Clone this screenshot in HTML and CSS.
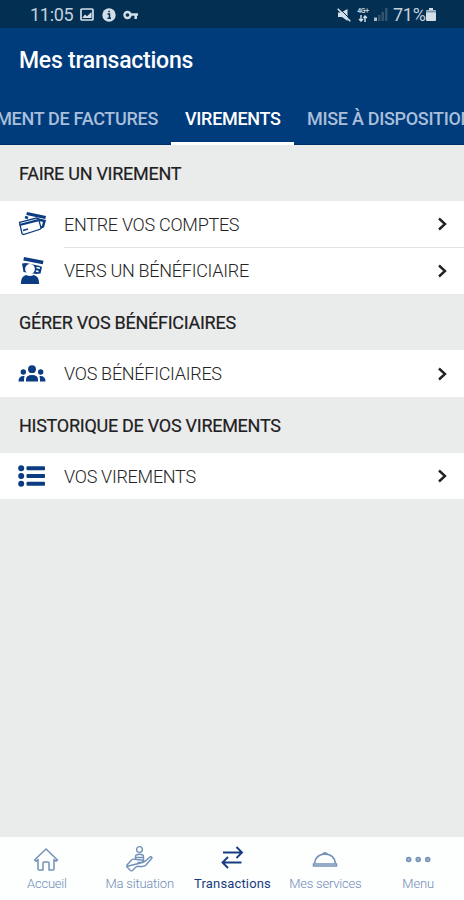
FILE: index.html
```html
<!DOCTYPE html>
<html lang="fr">
<head>
<meta charset="utf-8">
<title>Mes transactions</title>
<link rel="stylesheet" href="styles.css">
</head>
<body>
<div class="app">
  <div class="status">
    <span class="clock">11:05</span>
    <svg class="s-image" width="14" height="13" viewBox="0 0 14 13"><rect x="1" y="1" width="12" height="11" rx="1" fill="none" stroke="#d3dfe8" stroke-width="1.7"/><path d="M2.500 9.500L5 6.500l2 1.800L11.500 4v6h-9z" fill="#d3dfe8"/></svg>
    <svg class="s-info" width="14" height="14" viewBox="0 0 14 14"><circle cx="7" cy="7" r="6.700" fill="#d3dfe8"/><path d="M5.500 6H7.500V10M5.500 10.300h3.500M6.300 3.500h1.600" fill="none" stroke="#033052" stroke-width="1.500"/></svg>
    <svg class="s-key" width="16" height="10" viewBox="0 0 16 10"><circle cx="4.500" cy="5" r="3" fill="none" stroke="#d3dfe8" stroke-width="2.400"/><path d="M8 4.500h7M12.700 5v4" fill="none" stroke="#d3dfe8" stroke-width="2.500"/></svg>
    <span class="fill"></span>
    <svg class="s-mute" width="14" height="14" viewBox="0 0 14 14"><path d="M1 4.500h3L10.500 1v12L5 9H1z" fill="#d3dfe8"/><path d="M2 0L14 12" stroke="#033052" stroke-width="1"/><path d="M.7.700L13.300 13.300" stroke="#d3dfe8" stroke-width="1.600"/></svg>
    <span class="net"><span>4G+</span><svg width="10" height="7" viewBox="0 0 10 7"><path d="M3 0v6M1 4l2 2 2-2M7 7V1M5.500 3L7 1l2 2" fill="none" stroke="#d3dfe8" stroke-width="1.400"/></svg></span>
    <svg class="s-signal" width="14" height="13" viewBox="0 0 14 13"><path d="M0 9.500h3V13H0z" fill="#a9bdcb"/><path d="M4 7h2.500v6H4zM7.500 4H10v9H7.500zM11 0h2.500v13H11z" fill="#31536f"/></svg>
    <span class="pct">71%</span>
    <svg class="s-battery" width="10" height="13" viewBox="0 0 10 13"><path d="M3 0h4v2h2q1 0 1 1v9q0 1-1 1H1q-1 0-1-1V3q0-1 1-1h2z" fill="#d3dfe8"/><path d="M0 2.500h10V4.500H0z" fill="#7c98ac"/></svg>
  </div>
  <header class="header">
    <h1>Mes transactions</h1>
    <nav class="tabs">
      <span class="tab first">MENT DE FACTURES</span>
      <span class="tab active">VIREMENTS</span>
      <span class="tab last">MISE À DISPOSITION</span>
    </nav>
  </header>
  <main>
    <h2>FAIRE UN VIREMENT</h2>
    <div class="row">
      <svg class="icon" width="28" height="26" viewBox="0 0 28 26"><path d="M9 1l19 4-.7 3L8.300 4z" fill="#0b3b80"/><path d="M7 6l3 1M20 8.500l6.500 1.500-1.500 5.500-3 1.500" fill="none" stroke="#0b3b80" stroke-width="2.500"/><path d="M1.500 11.300L18.500 7l2 .8 2.500 9-1 1.500-16.500 5.200-1.500-1z" fill="#fff" stroke="#0b3b80" stroke-width="1.300"/><path d="M1.500 14L20.500 9.200" stroke="#0b3b80" stroke-width="2.300"/><path d="M5 19.500l5-1.500" stroke="#0b3b80" stroke-width="1.500"/></svg>
      <span class="label">ENTRE VOS COMPTES</span>
      <svg class="chev" width="10" height="14" viewBox="0 0 10 14"><path d="M2 1.500L8 7l-6 5.500" fill="none" stroke="#222" stroke-width="2.400"/></svg>
    </div>
    <div class="row divided">
      <svg class="icon" width="28" height="28" viewBox="0 0 28 28"><path d="M6 0l19.500 3.700-.7 3.600L5.300 3.500z" fill="#0b3b80"/><path d="M4 6.500l4-.5 14 3 2 1-1.500 6.500-4 .5-13-2z" fill="#0b3b80"/><path d="M18.500 10.500l3.500.8M18 14l2.500.5" stroke="#fff" stroke-width="1.400"/><circle cx="12" cy="12" r="4.900" fill="#fff"/><path d="M2.800 27q0-8 5.500-9 3.700 2 7.400 0 5.500 1 5.500 9z" fill="#0b3b80"/></svg>
      <span class="label">VERS UN BÉNÉFICIAIRE</span>
      <svg class="chev" width="10" height="14" viewBox="0 0 10 14"><path d="M2 1.500L8 7l-6 5.500" fill="none" stroke="#222" stroke-width="2.400"/></svg>
    </div>
    <h2>GÉRER VOS BÉNÉFICIAIRES</h2>
    <div class="row single">
      <svg class="icon" width="28" height="17" viewBox="0 0 28 17"><g fill="#0b3b80"><circle cx="14" cy="4.200" r="3.900"/><circle cx="5.300" cy="7" r="2.700"/><circle cx="22.700" cy="7" r="2.700"/><path d="M8 16.500v-2q0-4.500 6-4.500t6 4.500v2zM.5 16.500q0-6 6-5.500Q6 12.500 6 16.500zM27.500 16.500q0-6-6-5.500.500 1.500.5 5.500z"/></g></svg>
      <span class="label">VOS BÉNÉFICIAIRES</span>
      <svg class="chev" width="10" height="14" viewBox="0 0 10 14"><path d="M2 1.500L8 7l-6 5.500" fill="none" stroke="#222" stroke-width="2.400"/></svg>
    </div>
    <h2>HISTORIQUE DE VOS VIREMENTS</h2>
    <div class="row">
      <svg class="icon" width="28" height="22" viewBox="0 0 28 22"><g fill="#0b3b80"><circle cx="3.200" cy="3.200" r="3"/><circle cx="3.200" cy="11" r="3"/><circle cx="3.200" cy="18.800" r="3"/><rect x="8.500" y="1.200" width="18.500" height="4" rx="1"/><rect x="8.500" y="9" width="18.500" height="4" rx="1"/><rect x="8.500" y="16.800" width="18.500" height="4" rx="1"/></g></svg>
      <span class="label">VOS VIREMENTS</span>
      <svg class="chev" width="10" height="14" viewBox="0 0 10 14"><path d="M2 1.500L8 7l-6 5.500" fill="none" stroke="#222" stroke-width="2.400"/></svg>
    </div>
  </main>
  <nav class="bottom">
    <div class="item">
      <svg width="28" height="28" viewBox="0 0 28 28"><path d="M2.500 15L14 4l11.500 11-1.500 1.300-2-1.800v9.500q0 1-1 1h-4v-7q0-1-1-1h-4q-1 0-1 1v7H7q-1 0-1-1v-9.500l-2 1.800z" fill="none" stroke="#7391b8" stroke-width="1.500" stroke-linejoin="round"/></svg>
      <span>Accueil</span>
    </div>
    <div class="item">
      <svg width="28" height="28" viewBox="0 0 28 28"><g fill="none" stroke="#7391b8" stroke-width="1.400" stroke-linejoin="round"><circle cx="14.500" cy="4.500" r="2.900"/><path d="M10.500 14v-2.500q0-2.200 4-2.200t4 2.200V16M11 12.500h7"/><path d="M1.500 20.500l5-5.500q2-1.500 5-.5l5 .5q2.500 1 0 2.500h-4M17.500 17.500l3-1.500 4.500-4q2-.8 2 1l-6 7q-1.500 1.500-4 1.500h-5.500l-4 4q-1 .8-2 0l-4-4z"/></g></svg>
      <span>Ma situation</span>
    </div>
    <div class="item current">
      <svg width="28" height="28" viewBox="0 0 28 28"><path d="M5 7.500h19M18.500 2l5.500 5.500-5.500 5.500M23.500 17.500H4.500M10 12l-5.500 5.500L10 23" fill="none" stroke="#173d80" stroke-width="1.900"/></svg>
      <span>Transactions</span>
    </div>
    <div class="item">
      <svg width="28" height="28" viewBox="0 0 28 28"><path d="M2.500 21v-2h23v2z" fill="none" stroke="#7391b8" stroke-width="1.500"/><path d="M3.500 18.500Q4.500 9.500 14 9q9.500.5 10.500 9.500" fill="none" stroke="#7391b8" stroke-width="1.700"/><path d="M10.500 9.500q1-2.500 3.500-2.500t3.500 2.500z" fill="#7391b8"/></svg>
      <span>Mes services</span>
    </div>
    <div class="item">
      <svg width="28" height="28" viewBox="0 0 28 28"><g fill="#a5b9d3" stroke="#7391b8" stroke-width="1.500"><circle cx="4.700" cy="14.500" r="2"/><circle cx="14.200" cy="14.500" r="2"/><circle cx="23.700" cy="14.500" r="2"/></g></svg>
      <span>Menu</span>
    </div>
  </nav>
</div>
</body>
</html>
```
FILE: styles.css
```css
* { box-sizing: border-box; }
body { margin: 0; font-family: Roboto, "Liberation Sans", sans-serif; }
.app { width: 464px; height: 900px; display: flex; flex-direction: column; background: #eaecec; overflow: hidden; }
svg { display: block; flex: none; }
span { white-space: nowrap; }

.status { height: 28px; flex: none; background: #033052; color: #c3d1dc; display: flex; align-items: center; padding: 1px 28px 0 30px; font-size: 18px; letter-spacing: -.3px; }
.clock { width: 50px; }
.s-info { margin-left: 8px; }
.s-key { margin-left: 7px; }
.fill { flex: 1; }
.net { display: flex; flex-direction: column; align-items: center; width: 14px; margin-left: 5px; font-size: 7px; font-weight: 700; line-height: 7px; }
.s-signal { margin-left: 4px; }
.pct { width: 33px; margin-left: 5px; }

.header { height: 117px; flex: none; background: #003b7b; display: flex; flex-direction: column; justify-content: space-between; border-bottom: 1px solid #00306c; }
h1 { margin: 0; padding: 17px 0 0 19px; font-size: 23px; font-weight: 500; line-height: 32px; letter-spacing: -.25px; color: #fff; }
.tabs { display: grid; grid-template-columns: 171px 123px 170px; height: 54px; font-size: 18px; font-weight: 500; letter-spacing: -.3px; color: #a9bfda; line-height: 56px; margin-bottom: -1px; }
.tab { overflow: hidden; }
.first { display: flex; justify-content: flex-end; padding-right: 13px; }
.active { color: #fff; border-bottom: 3px solid #fff; padding-left: 14px; }
.last { padding-left: 13px; }

main { flex: 1; }
h2 { margin: 0; height: 56px; padding-left: 19px; font-size: 18px; font-weight: 400; line-height: 57px; letter-spacing: -.27px; color: #1f2021; -webkit-text-stroke: .2px #1f2021; }
.row { height: 46px; background: #fff; display: flex; align-items: center; padding: 0 17px 0 18px; }
.divided { height: 47px; background: linear-gradient(#e1e3e4, #e1e3e4) 64px 0 / 400px 1px no-repeat #fff; }
.single { height: 47px; }
.label { flex: 1; margin-left: 18px; font-size: 18px; font-weight: 300; letter-spacing: -.28px; color: #252525; }

.bottom { height: 63px; flex: none; background: #fdfefe; display: grid; grid-template-columns: repeat(5, 1fr); }
.item { display: flex; flex-direction: column; align-items: center; padding-top: 8px; font-size: 13px; line-height: 22px; letter-spacing: -.2px; font-weight: 300; color: #6f8db5; }
.item span { padding-left: 1px; }
.current { color: #173d80; font-weight: 400; letter-spacing: .15px; }
```
